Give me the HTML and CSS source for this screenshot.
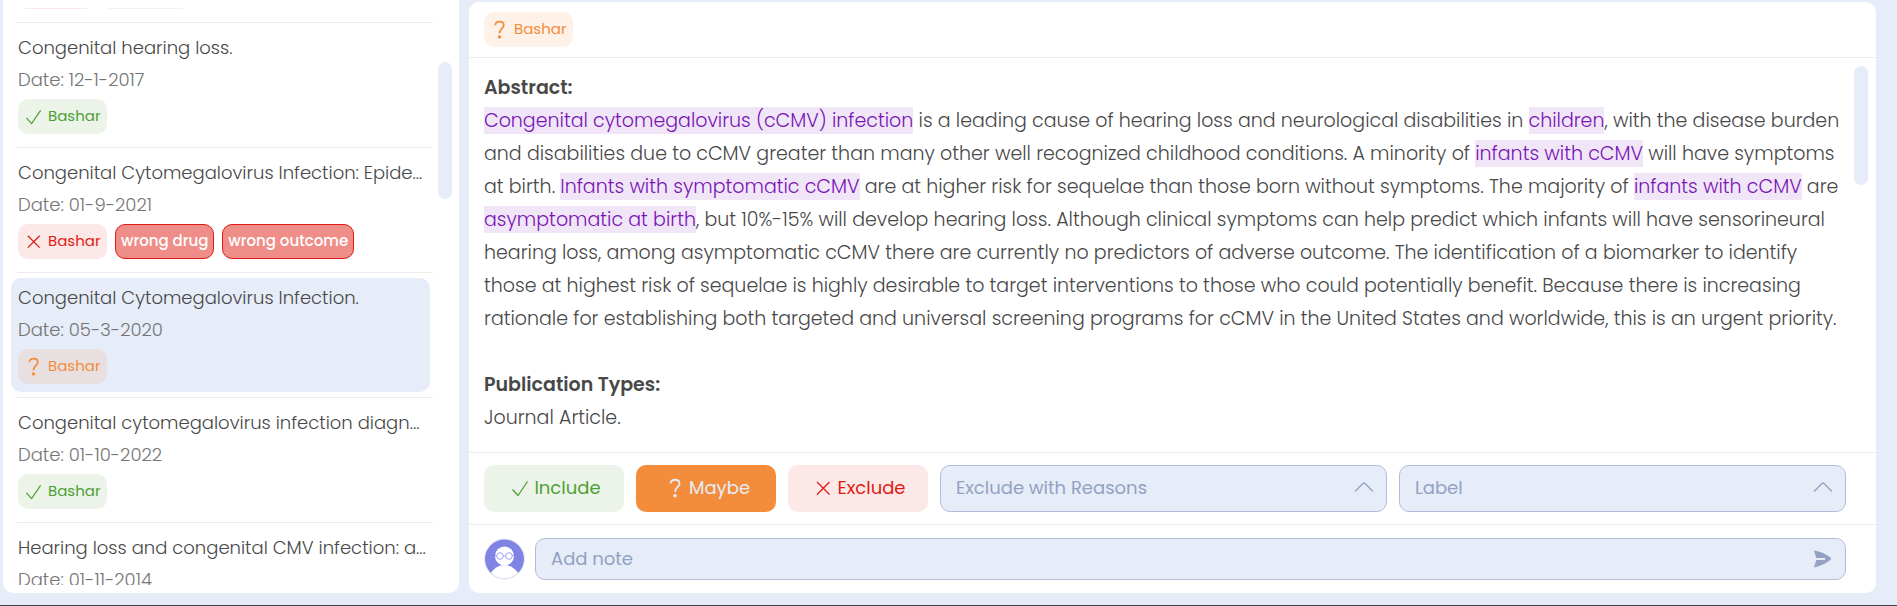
FILE: index.html
```html
<!DOCTYPE html>
<html lang="en">

<head>
    <meta charset="UTF-8">
    <title>Screening</title>
    <link rel="stylesheet" href="styles.css">
</head>

<body>
    <svg width="0" height="0" class="sprite" aria-hidden="true">
        <symbol id="check" viewBox="0 0 20 20">
            <path d="M2.500 11.500 8 17.500 17.500 3.500" />
        </symbol>
        <symbol id="cross" viewBox="0 0 20 20">
            <path d="M4 4 16.500 16.500M16.500 4 4 16.500" />
        </symbol>
        <symbol id="question" viewBox="0 0 20 20">
            <path d="M5.500 5.500C6 .500 14.500 .500 14.500 5.500C14.500 9 10 9.500 10 14" stroke-width="1.800" />
            <circle cx="10" cy="17.800" r="1.800" fill="currentColor" stroke="none" />
        </symbol>
        <symbol id="chevron" viewBox="0 0 20 12">
            <path d="M1 10.500 9 2.500Q10 1.500 11 2.500L19 10.500" />
        </symbol>
    </svg>

    <div class="page">
        <aside class="sidebar">
            <div class="studies">
                <div class="study-end">
                    <span class="badge exclude short"></span>
                    <span class="badge include"></span>
                </div>
                <article class="study">
                    <div class="study-box">
                        <h3>Congenital hearing loss.</h3>
                        <p>Date: 12-1-2017</p>
                        <div class="badges">
                            <span class="badge include"><svg><use href="#check" /></svg>Bashar</span>
                        </div>
                    </div>
                </article>
                <article class="study">
                    <div class="study-box">
                        <h3>Congenital Cytomegalovirus Infection: Epide...</h3>
                        <p>Date: 01-9-2021</p>
                        <div class="badges">
                            <span class="badge exclude"><svg><use href="#cross" /></svg>Bashar</span>
                            <span class="reason">wrong drug</span>
                            <span class="reason">wrong outcome</span>
                        </div>
                    </div>
                </article>
                <article class="study">
                    <div class="study-box selected">
                        <h3>Congenital Cytomegalovirus Infection.</h3>
                        <p>Date: 05-3-2020</p>
                        <div class="badges">
                            <span class="badge maybe"><svg><use href="#question" /></svg>Bashar</span>
                        </div>
                    </div>
                </article>
                <article class="study">
                    <div class="study-box">
                        <h3>Congenital cytomegalovirus infection diagn...</h3>
                        <p>Date: 01-10-2022</p>
                        <div class="badges">
                            <span class="badge include"><svg><use href="#check" /></svg>Bashar</span>
                        </div>
                    </div>
                </article>
                <article class="study">
                    <div class="study-box">
                        <h3>Hearing loss and congenital CMV infection: a...</h3>
                        <p>Date: 01-11-2014</p>
                    </div>
                </article>
            </div>
            <div class="track">
                <div class="thumb list-thumb"></div>
            </div>
        </aside>

        <main class="panel">
            <header class="panel-head">
                <span class="badge maybe"><svg><use href="#question" /></svg>Bashar</span>
            </header>

            <div class="content">
                <div class="text">
                    <h2>Abstract:</h2>
                    <p><mark>Congenital cytomegalovirus (cCMV) infection</mark> is a leading cause of hearing loss and neurological disabilities in <mark>children</mark>, with the disease burden<br>
                    and disabilities due to cCMV greater than many other well recognized childhood conditions. A minority of <mark>infants with cCMV</mark> will have symptoms<br>
                    at birth. <mark>Infants with symptomatic cCMV</mark> are at higher risk for sequelae than those born without symptoms. The majority of <mark>infants with cCMV</mark> are<br>
                    <mark>asymptomatic at birth</mark>, but 10%-15% will develop hearing loss. Although clinical symptoms can help predict which infants will have sensorineural<br>
                    hearing loss, among asymptomatic cCMV there are currently no predictors of adverse outcome. The identification of a biomarker to identify<br>
                    those at highest risk of sequelae is highly desirable to target interventions to those who could potentially benefit. Because there is increasing<br>
                    rationale for establishing both targeted and universal screening programs for cCMV in the United States and worldwide, this is an urgent priority.</p>
                    <h2 class="types">Publication Types:</h2>
                    <p>Journal Article.</p>
                </div>
                <div class="track">
                    <div class="thumb text-thumb"></div>
                </div>
            </div>

            <div class="actions">
                <button type="button" class="btn include"><svg><use href="#check" /></svg>Include</button>
                <button type="button" class="btn maybe-on"><svg><use href="#question" /></svg>Maybe</button>
                <button type="button" class="btn exclude"><svg><use href="#cross" /></svg>Exclude</button>
                <div class="select">
                    <select aria-label="Exclude with Reasons">
                        <option>Exclude with Reasons</option>
                    </select>
                    <svg><use href="#chevron" /></svg>
                </div>
                <div class="select">
                    <select aria-label="Label">
                        <option>Label</option>
                    </select>
                    <svg><use href="#chevron" /></svg>
                </div>
            </div>

            <form class="note">
                <svg class="avatar" viewBox="0 0 42 42">
                    <clipPath id="round"><circle cx="20.500" cy="21" r="19.500" /></clipPath>
                    <circle cx="20.500" cy="21" r="20" fill="#fff" stroke="#e6e8ee" />
                    <g clip-path="url(#round)">
                        <rect width="42" height="42" fill="#7f83e3" />
                        <circle cx="20.500" cy="18" r="9.500" fill="#fff" />
                        <path d="M6 36Q12 27 20.500 27T35 36V42H6Z" fill="#fff" />
                    </g>
                    <g fill="none" stroke="#a3a6ec">
                        <circle cx="16" cy="18" r="3.300" />
                        <circle cx="25" cy="18" r="3.300" />
                        <path d="M19.500 18h2M11 17.500h2M28 17.500h2" />
                    </g>
                </svg>
                <div class="note-box">
                    <input type="text" placeholder="Add note" aria-label="Add note">
                    <button type="button" aria-label="Send">
                        <svg viewBox="0 0 18 18"><path d="M0 .500C7 1.500 14 5 17.500 8.500C14 12.500 7 16 0 17.500L2.200 10H11V8H2.200Z" /></svg>
                    </button>
                </div>
            </form>
        </main>
    </div>
</body>

</html>
```

FILE: styles.css
```css
* {
    box-sizing: border-box;
}

body {
    margin: 0;
    background-color: #e6ecf8;
    color: #484848;
    font-family: Poppins, Inter, sans-serif;
}

h2, h3, p {
    margin: 0;
}

.sprite {
    position: absolute;
}

svg {
    fill: none;
    stroke: currentColor;
    stroke-width: 1.3;
    flex: none;
}

.page {
    display: grid;
    grid-template-columns: 456px 1fr;
    grid-template-rows: minmax(0, 1fr);
    gap: 10px;
    height: 100vh;
    padding: 0 21px 12px 3px;
    border-bottom: 1px solid #45424a;
}

/* study list */
.sidebar {
    display: flex;
    min-height: 0;
    padding: 8px 7px 8px 8px;
    background-color: #fff;
    border-radius: 0 0 10px 10px;
}

.studies {
    flex: 1;
    min-width: 0;
    overflow: hidden;
}

.study-end {
    display: flex;
    align-items: flex-end;
    gap: 7px;
    height: 14px;
    padding: 0 7px 13px;
}

.study {
    position: relative;
    height: 125px;
    padding: 6px 8px 5px 0;
}

.study::before {
    content: "";
    position: absolute;
    top: 0;
    left: 6px;
    right: 5px;
    border-top: 1px solid #ebebeb;
}

.study-box {
    height: 114px;
    padding: 4px 7px;
    border-radius: 10px;
}

.selected {
    background-color: #e6ecf8;
}

.study h3,
.study p {
    font-size: 18px;
    line-height: 32px;
    font-weight: 300;
    white-space: nowrap;
}

.study p {
    color: #757575;
}

.badges {
    display: flex;
    gap: 8px;
    margin-top: 3px;
}

.badge {
    display: inline-flex;
    align-items: center;
    gap: 5px;
    width: 89px;
    height: 35px;
    padding: 0 0 2px 6px;
    border-radius: 10px;
    font-size: 15px;
}

.short {
    width: 76px;
}

.badge svg {
    width: 19px;
    height: 19px;
    margin-top: 2px;
}

.include {
    background-color: #ecf4ea;
    color: #4d9f35;
}

.exclude {
    background-color: #fce8e7;
    color: #df1b12;
}

.maybe {
    background-color: rgba(243, 141, 60, 0.12);
    color: #f38d3c;
}

.reason {
    height: 35px;
    padding: 0 5px;
    border: 1px solid #df1b12;
    border-radius: 10px;
    background-color: #ef8d88;
    color: #fff;
    font-size: 15px;
    line-height: 32px;
    font-weight: 500;
}

.track {
    flex: 0 0 14px;
}

.thumb {
    border-radius: 7px;
    background-color: #e6ecf8;
}

.list-thumb {
    height: 137px;
    margin-top: 54px;
}

.text-thumb {
    height: 119px;
    margin-top: 8px;
}

/* article panel */
.panel {
    display: flex;
    flex-direction: column;
    min-width: 0;
    margin-top: 2px;
    background-color: #fff;
    border-radius: 10px;
}

.panel-head {
    display: flex;
    padding: 10px 15px;
    border-bottom: 1px solid #ebebeb;
}

.content {
    flex: 1;
    display: flex;
    min-height: 0;
    padding: 0 8px 0 15px;
}

.text {
    flex: 1;
    min-width: 0;
    padding: 13px 4px 0 0;
    overflow: hidden;
    font-size: 19px;
    line-height: 33px;
    font-weight: 300;
}

.text h2 {
    font-size: 19px;
    font-weight: 600;
}

.text .types {
    margin-top: 33px;
}

mark {
    background-color: #f0e6f8;
    color: #7a14b4;
}

.actions {
    display: flex;
    gap: 12px;
    padding: 12px 30px 12px 15px;
    border-top: 1px solid #ebebeb;
    border-bottom: 1px solid #ebebeb;
}

.btn {
    display: flex;
    align-items: center;
    justify-content: center;
    gap: 4px;
    width: 140px;
    height: 47px;
    padding: 0 0 2px 3px;
    border: none;
    border-radius: 10px;
    font-family: inherit;
    font-size: 18px;
    cursor: pointer;
}

.btn svg {
    width: 20px;
    height: 20px;
}

.maybe-on {
    background-color: #f38d3c;
    color: #e6ecf8;
}

.select {
    position: relative;
    flex: 1;
}

select {
    appearance: none;
    width: 100%;
    height: 47px;
    padding: 0 15px 2px;
    border: 1px solid #b1bdd8;
    border-radius: 10px;
    background-color: #e6ecf8;
    color: #93a1c2;
    font-family: inherit;
    font-size: 18px;
}

.select svg {
    position: absolute;
    top: 16px;
    right: 13px;
    width: 20px;
    height: 12px;
    color: #93a1c2;
    pointer-events: none;
}

.note {
    display: flex;
    gap: 9px;
    padding: 13px 30px 13px 15px;
}

.avatar {
    width: 42px;
    height: 42px;
    stroke: none;
    stroke-width: 1;
}

.note-box {
    flex: 1;
    display: flex;
    align-items: center;
    height: 42px;
    padding: 0 13px 0 15px;
    border: 1px solid #b1bdd8;
    border-radius: 10px;
    background-color: #e6ecf8;
}

.note-box input {
    flex: 1;
    padding: 0 0 2px;
    border: none;
    outline: none;
    background: none;
    font-family: inherit;
    font-size: 18px;
}

.note-box input::placeholder {
    color: #93a1c2;
}

.note-box button {
    display: flex;
    padding: 0;
    border: none;
    background: none;
    color: #93a1c2;
    cursor: pointer;
}

.note-box svg {
    width: 18px;
    height: 18px;
    fill: currentColor;
    stroke: none;
}
```
